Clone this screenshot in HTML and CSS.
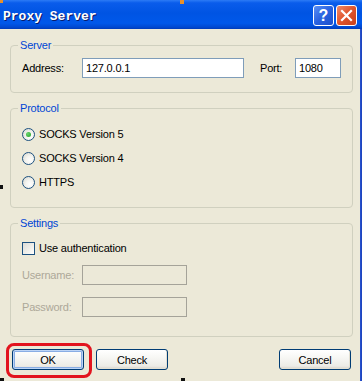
FILE: index.html
```html
<!DOCTYPE html>
<html>
<head>
<meta charset="utf-8">
<link rel="stylesheet" href="styles.css">
</head>
<body>
<div class="window">
  <div class="titlebar">
    <span class="title">Proxy Server</span>
    <span class="cbtn help">?</span>
    <span class="cbtn close">
      <svg width="19" height="19" viewBox="0 0 19 19"><path d="M5 5 L14 14 M14 5 L5 14" stroke="#fff" stroke-width="2.2" stroke-linecap="square" fill="none"/></svg>
    </span>
  </div>
  <div class="main">
    <div class="content">
      <fieldset class="group server">
        <legend>Server</legend>
        <div class="row">
          <span class="lbl">Address:</span>
          <span class="input addr-input">127.0.0.1</span>
          <span class="lbl port-lbl">Port:</span>
          <span class="input port-input">1080</span>
        </div>
      </fieldset>
      <fieldset class="group protocol">
        <legend>Protocol</legend>
        <div class="opt"><span class="radio checked"></span><span>SOCKS Version 5</span></div>
        <div class="opt"><span class="radio"></span><span>SOCKS Version 4</span></div>
        <div class="opt"><span class="radio"></span><span>HTTPS</span></div>
      </fieldset>
      <fieldset class="group settings">
        <legend>Settings</legend>
        <div class="opt"><span class="checkbox"></span><span>Use authentication</span></div>
        <div class="row user-row">
          <span class="lbl disabled">Username:</span>
          <span class="input disabled-input"></span>
        </div>
        <div class="row pass-row">
          <span class="lbl disabled">Password:</span>
          <span class="input disabled-input"></span>
        </div>
      </fieldset>
      <div class="buttons">
        <span class="btn-wrap"><span class="btn default">OK</span></span>
        <span class="btn check">Check</span>
        <span class="btn cancel">Cancel</span>
      </div>
    </div>
    <div class="frame-right"></div>
  </div>
  <span class="handle orange h-tl"></span>
  <span class="handle orange h-tm"></span>
  <span class="handle dark h-ml"></span>
  <span class="handle dark h-bl"></span>
  <span class="handle dark h-bm"></span>
</div>
</body>
</html>
```
FILE: styles.css
```css
html, body {
  margin: 0;
  padding: 0;
  background: #ECE9D8;
}
body {
  font-family: "Liberation Sans", Arial, sans-serif;
  font-size: 11px;
  letter-spacing: -0.2px;
  color: #000;
}
.window {
  position: relative;
  width: 362px;
  height: 381px;
  display: flex;
  flex-direction: column;
  background: #ECE9D8;
  overflow: hidden;
}
.titlebar {
  height: 29px;
  flex: none;
  display: flex;
  align-items: flex-start;
  background: linear-gradient(to bottom, #2C7BF5 0%, #0A5CEB 10%, #0054E3 45%, #0058EA 80%, #0048D0 94%, #003BB8 100%);
}
.title {
  flex: 1;
  margin: 10px 0 0 3px;
  font-family: "Liberation Mono", monospace;
  font-weight: bold;
  font-size: 13px;
  line-height: 13px;
  letter-spacing: 0;
  color: #fff;
  text-shadow: 1px 1px 0 #0A1A6A;
}
.cbtn {
  width: 21px;
  height: 21px;
  box-sizing: border-box;
  margin-top: 5px;
  border: 1px solid #fff;
  border-radius: 3px;
  display: flex;
  align-items: center;
  justify-content: center;
}
.help {
  margin-right: 2px;
  background: linear-gradient(135deg, #5A8FF5 0%, #2962E0 50%, #1B4FCC 100%);
  color: #fff;
  font-weight: bold;
  font-size: 16px;
  letter-spacing: 0;
  line-height: 19px;
}
.close {
  margin-right: 5px;
  background: linear-gradient(135deg, #F08A68 0%, #E0542C 50%, #C8401C 100%);
}
.main {
  flex: 1;
  display: flex;
}
.content {
  flex: 1;
  padding: 10px 7px 0 10px;
  display: flex;
  flex-direction: column;
}
.frame-right {
  width: 6px;
  flex: none;
  background: linear-gradient(to right, #2A55D0, #0E2FA8 60%, #0A2590);
}
.group {
  margin: 0;
  padding: 6px 11px 14px;
  border: 1px solid #D0D0BF;
  border-radius: 4px;
  min-width: 0;
}
.group + .group {
  margin-top: 9px;
}
.group legend {
  padding: 0 2px;
  margin-left: -4px;
  color: #0046D5;
  line-height: 13px;
}
.row {
  display: flex;
  align-items: center;
  height: 20px;
}
.lbl {
  width: 60px;
  flex: none;
}
.input {
  height: 20px;
  box-sizing: border-box;
  border: 1px solid #7F9DB9;
  background: #fff;
  padding: 0 3px;
  line-height: 18px;
  flex: none;
}
.addr-input { width: 162px; }
.port-lbl {
  width: 35px;
  margin-left: 16px;
}
.port-input { width: 46px; }
.protocol {
  padding-top: 7px;
  padding-bottom: 13px;
}
.opt {
  display: flex;
  align-items: center;
  height: 24px;
  gap: 4px;
}
.radio {
  width: 13px;
  height: 13px;
  box-sizing: border-box;
  border: 1px solid #1C5180;
  border-radius: 50%;
  background: radial-gradient(circle at 65% 65%, #FFFFFF 0%, #F4F4F0 40%, #D6D5CB 100%);
  display: flex;
  align-items: center;
  justify-content: center;
  flex: none;
}
.radio.checked::after {
  content: "";
  width: 5px;
  height: 5px;
  border-radius: 50%;
  background: radial-gradient(circle at 35% 35%, #6AD36F, #21A121);
}
.checkbox {
  width: 13px;
  height: 13px;
  box-sizing: border-box;
  border: 1px solid #1C5180;
  background: linear-gradient(135deg, #DCDCD7 0%, #F0F0EC 60%, #FFFFFF 100%);
  flex: none;
}
.settings {
  padding-top: 6px;
  padding-bottom: 19px;
}
.user-row { margin-top: 5px; }
.pass-row { margin-top: 12px; }
.disabled { color: #ACA899; }
.disabled-input {
  width: 105px;
  background: #ECE9D8;
  border-color: #A5A399;
}
.buttons {
  display: flex;
  margin-top: 12px;
  padding: 0 2px;
}
.btn-wrap {
  position: relative;
  display: flex;
}
.btn-wrap::after {
  content: "";
  position: absolute;
  top: -6px;
  left: -6px;
  right: -8px;
  bottom: -8px;
  border: 3px solid #E2141E;
  border-radius: 8px;
}
.btn {
  width: 72px;
  height: 21px;
  box-sizing: border-box;
  border: 1px solid #003C74;
  border-radius: 3px;
  background: linear-gradient(to bottom, #FFFFFF 0%, #F7F7F4 40%, #ECEBE6 85%, #D6D0C5 100%);
  display: flex;
  align-items: center;
  justify-content: center;
  flex: none;
  box-shadow: inset -1px -1px 0 #E3E0D3;
}
.btn.default {
  box-shadow: inset 0 0 0 1px #BCD4F6, inset 0 0 0 2px #89ADE4;
}
.check { margin-left: 12px; }
.cancel { margin-left: auto; }
.handle {
  position: absolute;
  width: 4px;
  height: 4px;
}
.orange { background: #E8902A; }
.dark { background: #111; }
.h-tl { left: 0; top: 0; width: 3px; height: 3px; }
.h-tm { left: 180px; top: 0; }
.h-ml { left: 0; top: 185px; width: 3px; }
.h-bl { left: 0; top: 378px; }
.h-bm { left: 181px; top: 378px; }
```
